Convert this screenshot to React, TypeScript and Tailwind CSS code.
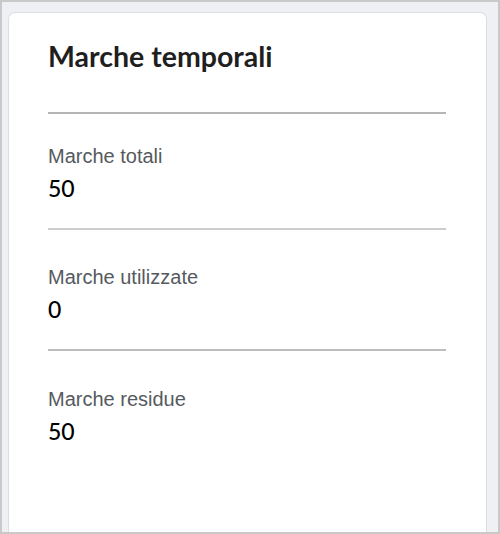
const stats = [
  { label: "Marche totali", value: "50", pt: "pt-[30px]", line: "border-[#cdcdcd]" },
  { label: "Marche utilizzate", value: "0", pt: "pt-[35px]", line: "border-[#bdbdbd]" },
  { label: "Marche residue", value: "50", pt: "pt-[36px]", line: "" },
];

const StatRow = ({ label, value, pt, line }: { label: string; value: string; pt: string; line: string }) => (
  <div className={`${pt} pb-[26px] ${line ? `border-b-2 ${line}` : ""}`}>
    <div className="font-['Liberation_Sans',Arial,sans-serif] text-[20px] leading-[24px] text-[#555a60]">{label}</div>
    <div className="mt-[6px] font-['Lato',sans-serif] text-[23px] font-medium leading-[28px] text-black">{value}</div>
  </div>
);

export default function App() {
  return (
    <div className="flex h-[534px] w-[500px] flex-col border-2 border-[#c9c9c9] bg-[#eff0f4] pl-[6px] pr-[11px] pt-[10px]">
      <div className="flex-1 rounded-t-[7px] border border-b-0 border-[#dcdee3] bg-white pl-[39px] pr-[40px]">
        <div className="border-b-2 border-[#b5b5b5] pb-[40px] pt-[27px]">
          <h2 className="font-['Lato',sans-serif] text-[28.5px] font-bold leading-[32px] text-[#1f1f1f]">Marche temporali</h2>
        </div>
        {stats.map((s) => (
          <StatRow key={s.label} {...s} />
        ))}
      </div>
    </div>
  );
}
